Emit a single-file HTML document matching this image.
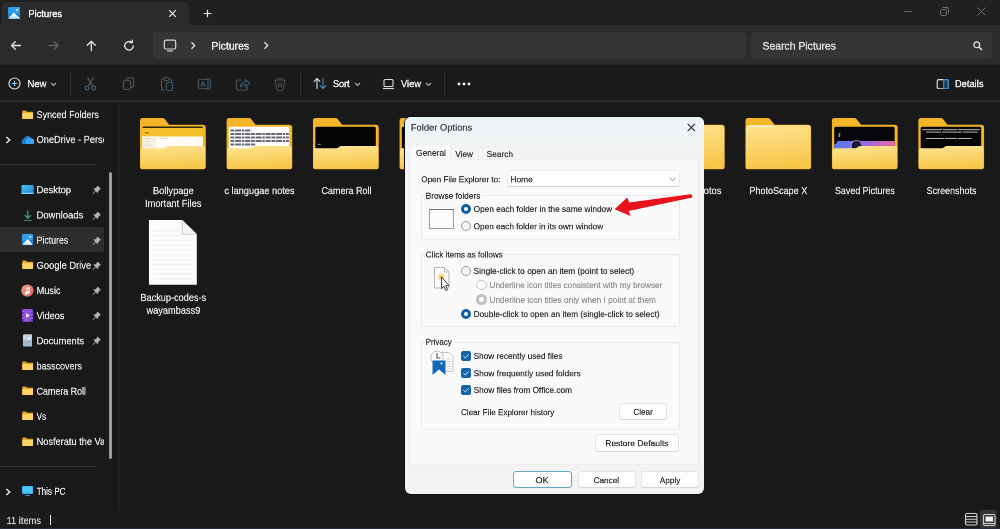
<!DOCTYPE html>
<html><head><meta charset="utf-8"><title>Pictures</title>
<style>
*{box-sizing:border-box;margin:0;padding:0}
html,body{width:1000px;height:529px;overflow:hidden;background:#191919}
body{position:relative;font-family:"Liberation Sans",sans-serif;font-size:9.5px;color:#fff}
.abs{position:absolute}
.t{position:absolute;left:0;top:0;white-space:nowrap;transform-origin:0 0;will-change:transform}
#titlebar{left:0;top:0;width:1000px;height:25px;background:#202020}
#tab{left:1.5px;top:1.5px;width:187.5px;height:23.5px;background:#2b2b2b;border-radius:5px 5px 0 0}
#nav{left:0;top:25px;width:1000px;height:40px;background:#2b2b2b}
#addr{left:153.3px;top:32.4px;width:592.5px;height:26.4px;background:#353535;border-radius:4px}
#search{left:751px;top:32.4px;width:241px;height:26.4px;background:#353535;border-radius:4px}
#cmd{left:0;top:65px;width:1000px;height:37px;background:#1b1b1b}
#cmdline{left:0;top:100px;width:1000px;height:2px;background:linear-gradient(#262626 50%,#313131 50%)}
#side{left:0;top:102px;width:120px;height:408px;background:#191919;border-right:2px solid;border-image:linear-gradient(90deg,#2c2c2c 50%,#222 50%) 1}
#status{left:0;top:510px;width:1000px;height:19px;background:#1b1b1b;border-bottom:1.5px solid #262a36}
.sep{position:absolute;width:1px;background:#303030;top:72px;height:24px}
.hl{position:absolute;height:1px;background:#343434;left:0;width:97px}
.sel{left:0;top:226.8px;width:103.7px;height:24.8px;background:#2d2d2d;border-radius:0 2px 2px 0;will-change:transform}
#dlg{left:404.8px;top:116.8px;width:299.2px;height:377.7px;background:#f3f3f3;border-radius:6px;overflow:hidden}
#dlgtitle{left:0;top:0;width:300px;height:43px;background:linear-gradient(#ecf4f8,#f1f4f5 55%,#f3f3f3 85%)}
#page{left:4.5px;top:42.2px;width:288.4px;height:305.8px;background:#fafafa;border:1px solid #eeeeee}
.grp{position:absolute;border:1px solid #e8e8e8;border-radius:2px}
.btn{position:absolute;background:#fdfdfd;border:1px solid #e4e4e4;border-bottom-color:#d6d6d6;border-radius:3px;will-change:transform}
.rad{position:absolute;width:10.4px;height:10.4px;border-radius:50%;border:1.2px solid #9a9a9a;background:#f6f6f6}
.rad.on{border:3.2px solid #0f5fa3;background:#fff}
.rad.dis{border-color:#c8c8c8;background:#fbfbfb}
.rad.dis.on{border:3.2px solid #c0c0c0;background:#fff}
.chk{position:absolute;width:10px;height:10px;border-radius:2px;background:#1464ad}
</style></head><body>
<div id="titlebar" class="abs"></div>
<div id="tab" class="abs"></div>
<div id="nav" class="abs"></div>
<div id="addr" class="abs"></div>
<div id="search" class="abs"></div>
<div id="cmd" class="abs"></div>
<div id="cmdline" class="abs"></div>
<div id="side" class="abs"></div>
<div id="status" class="abs"></div>
<svg class="abs" style="left:7.8px;top:7.3px" width="12.6" height="11.8" viewBox="0 0 15 14">
  <rect x="0" y="0" width="15" height="14" rx="2" fill="#1b86d8"/>
  <rect x="0" y="0" width="15" height="8" rx="2" fill="#2f9eea"/>
  <circle cx="10.8" cy="3.4" r="1.3" fill="#d8f0ff"/>
  <path d="M1.5 12.5 L7 6.5 L12.5 12.5Z" fill="#fff"/>
  <path d="M0.5 14 L3 11 L12 11 L14.5 14Z" fill="#bfe4ff"/>
</svg>
<div class="t" style="font-size:20.6px;line-height:29px;height:29px;color:#ffffff;-webkit-text-stroke:0.7px currentColor;transform:translate(28.5px,6.2px) scale(0.4502,0.5);">Pictures</div>
<svg class="abs" style="left:168px;top:8.8px" width="9" height="9" viewBox="0 0 9 9"><path d="M1.2 1.2L7.8 7.8M7.8 1.2L1.2 7.8" stroke="#ececec" stroke-width="1.2" fill="none"/></svg>
<svg class="abs" style="left:203.2px;top:9px" width="9" height="9" viewBox="0 0 9 9"><path d="M4.5 0.7V8.3M0.7 4.5H8.3" stroke="#ececec" stroke-width="1.2" fill="none"/></svg>
<svg class="abs" style="left:903px;top:6.3px" width="92" height="12" viewBox="0 0 92 12">
  <path d="M1 5.5H9" stroke="#5c5c5c" stroke-width="1" fill="none"/>
  <rect x="37.5" y="3.5" width="6" height="6" rx="1.2" stroke="#707070" stroke-width="1" fill="none"/>
  <path d="M39.5 1.5H44a1.5 1.5 0 0 1 1.5 1.5V7.5" stroke="#707070" stroke-width="1" fill="none"/>
  <path d="M74.5 1.5L82.5 9.5M82.5 1.5L74.5 9.5" stroke="#707070" stroke-width="1" fill="none"/>
</svg>
<svg class="abs" style="left:9px;top:38.5px" width="130" height="13" viewBox="0 0 130 13">
  <g fill="none" stroke-linecap="round" stroke-linejoin="round" stroke-width="1.3">
    <path d="M11.5 6.5H2.5M6.3 2.7L2.5 6.5L6.3 10.3" stroke="#e8e8e8"/>
    <path d="M40 6.5H49M45.2 2.7L49 6.5L45.2 10.3" stroke="#646464"/>
    <path d="M82.3 11.5V2.3M78.3 6.2L82.3 2.2L86.3 6.2" stroke="#e8e8e8"/>
    <path d="M124.3 6.8a4.3 4.3 0 1 1 -1.5 -3.3M123.3 1.2V3.7H120.8" stroke="#e8e8e8"/>
  </g>
</svg>
<svg class="abs" style="left:163px;top:38.5px" width="14" height="13" viewBox="0 0 14 13">
  <rect x="1.3" y="1.2" width="11.4" height="8.8" rx="1.5" fill="none" stroke="#d8d8d8" stroke-width="1.2"/>
  <path d="M4 12H10" stroke="#d0d0d0" stroke-width="1.2" fill="none"/>
</svg>
<svg class="abs" style="left:190.3px;top:41.3px" width="6" height="9" viewBox="0 0 6 9"><path d="M1.5 1.3L4.7 4.5L1.5 7.7" fill="none" stroke="#e6e6e6" stroke-width="1.3"/></svg>
<svg class="abs" style="left:263.3px;top:41.3px" width="6" height="9" viewBox="0 0 6 9"><path d="M1.5 1.3L4.7 4.5L1.5 7.7" fill="none" stroke="#e6e6e6" stroke-width="1.3"/></svg>
<svg class="abs" style="left:972.5px;top:41.3px" width="10" height="10" viewBox="0 0 10 10"><circle cx="3.8" cy="3.8" r="2.9" fill="none" stroke="#e8e8e8" stroke-width="1.3"/><path d="M6 6L9 9" stroke="#e8e8e8" stroke-width="1.5"/></svg>
<div class="t" style="font-size:21.6px;line-height:30px;height:30px;color:#f4f4f4;-webkit-text-stroke:0.7px currentColor;transform:translate(211.4px,38.6px) scale(0.4832,0.5);">Pictures</div>
<div class="t" style="font-size:21.6px;line-height:30px;height:30px;color:#e4e4e4;-webkit-text-stroke:0.7px currentColor;transform:translate(762.5px,38.6px) scale(0.482,0.5);">Search Pictures</div>
<svg class="abs" style="left:8px;top:77px" width="13" height="13" viewBox="0 0 13 13"><circle cx="6.5" cy="6.5" r="5.5" fill="none" stroke="#dedede" stroke-width="1.2"/><path d="M6.5 3.8V9.2M3.8 6.5H9.2" stroke="#8cc8f0" stroke-width="1.2"/></svg>
<svg class="abs" style="left:50px;top:82px" width="7" height="5" viewBox="0 0 7 5"><path d="M1 1L3.5 3.5L6 1" fill="none" stroke="#a8a8a8" stroke-width="1.2"/></svg>
<div class="sep" style="left:70px"></div>
<svg class="abs" style="left:82px;top:76px" width="210" height="16" viewBox="0 0 210 16" fill="none" stroke="#505050" stroke-width="1.2" stroke-linejoin="round">
  <path d="M5.5 1.5L11 10.5M11.5 1.5L6 10.5" stroke="#5c5c5c"/>
  <circle cx="5.2" cy="12" r="1.9" stroke="#3d5f78"/><circle cx="11.8" cy="12" r="1.9" stroke="#3d5f78"/>
  <rect x="41.5" y="4.5" width="7" height="9" rx="1.5"/>
  <path d="M44.5 4.5V3a1.2 1.2 0 0 1 1.2 -1.2H50a1.5 1.5 0 0 1 1.5 1.5V10a1.2 1.2 0 0 1 -1.2 1.2H48.5"/>
  <path d="M82.5 3H80.5a1 1 0 0 0 -1 1V13a1 1 0 0 0 1 1H83"/>
  <rect x="82" y="1.5" width="5" height="3" rx="1"/>
  <rect x="84.5" y="6.5" width="6" height="8" rx="1.2" stroke="#34566f"/>
  <path d="M87 3H88.5a1 1 0 0 1 1 1V6"/>
  <rect x="116.5" y="3.5" width="12" height="9" rx="1.5"/>
  <path d="M119 10.5L121 5.5L123 10.5M119.8 9H122.2" stroke="#34566f"/>
  <path d="M126 1.5V14.5" stroke="#34566f"/>
  <path d="M159 4H156a1.5 1.5 0 0 0 -1.5 1.5V12.5a1.5 1.5 0 0 0 1.5 1.5H164a1.5 1.5 0 0 0 1.5 -1.5V11"/>
  <path d="M158.5 10.5C159 7.5 161 6 163.5 6V3.5L167.5 7.3L163.5 11V8.5C161.5 8.5 160 9 158.5 10.5Z" stroke="#34566f"/>
  <path d="M192 4H204M196 4V2.5H200V4M193.5 4L194.4 13.3a1.3 1.3 0 0 0 1.3 1.2H200.3a1.3 1.3 0 0 0 1.3 -1.2L202.5 4M196.7 7V11.5M199.3 7V11.5" stroke-width="1.1"/>
</svg>
<div class="sep" style="left:300px"></div>
<svg class="abs" style="left:313px;top:77px" width="14" height="13" viewBox="0 0 14 13" fill="none" stroke-width="1.1" stroke-linecap="round" stroke-linejoin="round">
  <path d="M4 11.5V1.5M1.2 4.3L4 1.5L6.8 4.3" stroke="#e0e0e0"/>
  <path d="M10 1.5V11.5M7.2 8.7L10 11.5L12.8 8.7" stroke="#3a8fd0"/>
</svg>
<svg class="abs" style="left:354px;top:82px" width="7" height="5" viewBox="0 0 7 5"><path d="M1 1L3.5 3.5L6 1" fill="none" stroke="#a8a8a8" stroke-width="1.2"/></svg>
<svg class="abs" style="left:382px;top:78px" width="13" height="12" viewBox="0 0 13 12" fill="none" stroke="#dcdcdc" stroke-width="1.1">
  <rect x="2" y="1.5" width="9" height="7" rx="1"/><path d="M1 10.5H12"/>
</svg>
<svg class="abs" style="left:425px;top:82px" width="7" height="5" viewBox="0 0 7 5"><path d="M1 1L3.5 3.5L6 1" fill="none" stroke="#a8a8a8" stroke-width="1.2"/></svg>
<div class="sep" style="left:444px"></div>
<svg class="abs" style="left:457px;top:82px" width="14" height="4" viewBox="0 0 14 4" fill="#f8f8f8"><circle cx="2" cy="2" r="1.4"/><circle cx="7" cy="2" r="1.4"/><circle cx="12" cy="2" r="1.4"/></svg>
<svg class="abs" style="left:936px;top:78.5px" width="13.5" height="10.5" viewBox="0 0 13 11" fill="none">
  <rect x="0.7" y="0.7" width="11.6" height="9.6" rx="1.8" stroke="#e0e0e0" stroke-width="1.2"/>
  <path d="M7.5 0.7H10.5a1.8 1.8 0 0 1 1.8 1.8V8.5a1.8 1.8 0 0 1 -1.8 1.8H7.5Z" fill="#17405e" stroke="#3f8fcc" stroke-width="1.2"/>
</svg>
<div class="t" style="font-size:20.6px;line-height:29px;height:29px;color:#f0f0f0;-webkit-text-stroke:0.7px currentColor;transform:translate(27.5px,76.2px) scale(0.4605,0.5);">New</div>
<div class="t" style="font-size:20.6px;line-height:29px;height:29px;color:#f0f0f0;-webkit-text-stroke:0.7px currentColor;transform:translate(333px,76.2px) scale(0.4367,0.5);">Sort</div>
<div class="t" style="font-size:20.6px;line-height:29px;height:29px;color:#f0f0f0;-webkit-text-stroke:0.7px currentColor;transform:translate(401px,76.2px) scale(0.4511,0.5);">View</div>
<div class="t" style="font-size:20.6px;line-height:29px;height:29px;color:#f0f0f0;-webkit-text-stroke:0.7px currentColor;transform:translate(955px,76.2px) scale(0.4526,0.5);">Details</div>
<div class="abs sel"></div>
<div class="hl" style="top:164px"></div><div class="hl" style="top:466px"></div>
<div class="abs" style="left:108.9px;top:171.8px;width:3px;height:287px;background:#9c9c9c;border-radius:1.5px"></div>
<div class="t" style="font-size:20.6px;line-height:29px;height:29px;color:#e8e8e8;-webkit-text-stroke:0.5px currentColor;transform:translate(36.6px,107.09px) scale(0.4353,0.5);">Synced Folders</div>
<svg class="abs" style="left:21.6px;top:109.7px" width="11.6" height="9.3" viewBox="0 0 13 10.5"><path d="M0.3 1.5a1 1 0 0 1 1-1H4.3l1.4 1.4H11.7a1 1 0 0 1 1 1V9.2a1 1 0 0 1-1 1H1.3a1 1 0 0 1-1-1Z" fill="#e9a824"/><path d="M0.3 3.3H12.7V9.2a1 1 0 0 1-1 1H1.3a1 1 0 0 1-1-1Z" fill="#fbd466"/></svg>
<div class="abs" style="left:0;top:0;width:103.6px;height:529px;overflow:hidden"><div class="t" style="font-size:20.6px;line-height:29px;height:29px;color:#e8e8e8;-webkit-text-stroke:0.5px currentColor;transform:translate(36.6px,131.96px) scale(0.4475,0.5);">OneDrive - Persc</div></div>
<svg class="abs" style="left:20.5px;top:135.5px" width="13.6" height="8.8" viewBox="0 0 14 9"><path d="M3.4 8.7a3 3 0 0 1-.4-5.95A3.9 3.9 0 0 1 10.3 2.5a3.1 3.1 0 0 1 .4 6.2Z" fill="#1f7fd8"/><path d="M6.5 8.7h4.2a3.1 3.1 0 0 0 .6-6.1 3.6 3.6 0 0 0-4.8 6.1Z" fill="#3f9ff0"/></svg>
<div class="t" style="font-size:20.6px;line-height:29px;height:29px;color:#e8e8e8;-webkit-text-stroke:0.5px currentColor;transform:translate(36.6px,182.3px) scale(0.4553,0.5);">Desktop</div>
<svg class="abs" style="left:20.8px;top:185.1px" width="13.1" height="9.4" viewBox="0 0 13 10"><defs><linearGradient id="dg" x1="0" y1="0" x2="1" y2="1"><stop offset="0" stop-color="#45c4f2"/><stop offset="1" stop-color="#1f86d6"/></linearGradient></defs><rect x="0" y="0" width="13" height="10" rx="1.2" fill="url(#dg)"/><rect x="0" y="8.3" width="13" height="1.7" rx=".8" fill="#7fd0f4"/></svg>
<svg class="abs" style="left:92.3px;top:185.4px" width="9.5" height="9.5" viewBox="0 0 9 9"><path d="M5.3 0.5L8.5 3.7L7.3 4.3L6 5.6L5.6 7.9L3.6 5.9L1 8.5L0.5 8L3.1 5.4L1.1 3.4L3.4 3L4.7 1.7Z" fill="#b4b4b4"/></svg>
<div class="t" style="font-size:20.6px;line-height:29px;height:29px;color:#e8e8e8;-webkit-text-stroke:0.5px currentColor;transform:translate(36.6px,207.47px) scale(0.4573,0.5);">Downloads</div>
<svg class="abs" style="left:23px;top:209.5px" width="9.6" height="11.8" viewBox="0 0 10 12" fill="none" stroke="#34b08a" stroke-width="1.3"><path d="M5 0.5V8.3M1.8 5.2L5 8.4L8.2 5.2M0.8 11.2H9.2"/></svg>
<svg class="abs" style="left:92.3px;top:210.6px" width="9.5" height="9.5" viewBox="0 0 9 9"><path d="M5.3 0.5L8.5 3.7L7.3 4.3L6 5.6L5.6 7.9L3.6 5.9L1 8.5L0.5 8L3.1 5.4L1.1 3.4L3.4 3L4.7 1.7Z" fill="#b4b4b4"/></svg>
<div class="t" style="font-size:20.6px;line-height:29px;height:29px;color:#e8e8e8;-webkit-text-stroke:0.5px currentColor;transform:translate(36.6px,232.64px) scale(0.4247,0.5);">Pictures</div>
<svg class="abs" style="left:21.8px;top:234.1px" width="11.2" height="11.2" viewBox="0 0 15 15"><rect width="15" height="15" rx="2" fill="#1b86d8"/><rect width="15" height="8" rx="2" fill="#2f9eea"/><circle cx="10.8" cy="3.6" r="1.4" fill="#d8f0ff"/><path d="M1.5 13.2L7.5 6.8L13.5 13.2Z" fill="#fff"/><path d="M0.5 15L3 11.8H12L14.5 15Z" fill="#bfe4ff"/></svg>
<svg class="abs" style="left:92.3px;top:235.7px" width="9.5" height="9.5" viewBox="0 0 9 9"><path d="M5.3 0.5L8.5 3.7L7.3 4.3L6 5.6L5.6 7.9L3.6 5.9L1 8.5L0.5 8L3.1 5.4L1.1 3.4L3.4 3L4.7 1.7Z" fill="#b4b4b4"/></svg>
<div class="t" style="font-size:20.6px;line-height:29px;height:29px;color:#e8e8e8;-webkit-text-stroke:0.5px currentColor;transform:translate(36.6px,257.81px) scale(0.4533,0.5);">Google Drive</div>
<svg class="abs" style="left:21.6px;top:260.4px" width="11.6" height="9.3" viewBox="0 0 13 10.5"><path d="M0.3 1.5a1 1 0 0 1 1-1H4.3l1.4 1.4H11.7a1 1 0 0 1 1 1V9.2a1 1 0 0 1-1 1H1.3a1 1 0 0 1-1-1Z" fill="#e9a824"/><path d="M0.3 3.3H12.7V9.2a1 1 0 0 1-1 1H1.3a1 1 0 0 1-1-1Z" fill="#fbd466"/></svg>
<svg class="abs" style="left:92.3px;top:260.9px" width="9.5" height="9.5" viewBox="0 0 9 9"><path d="M5.3 0.5L8.5 3.7L7.3 4.3L6 5.6L5.6 7.9L3.6 5.9L1 8.5L0.5 8L3.1 5.4L1.1 3.4L3.4 3L4.7 1.7Z" fill="#b4b4b4"/></svg>
<div class="t" style="font-size:20.6px;line-height:29px;height:29px;color:#e8e8e8;-webkit-text-stroke:0.5px currentColor;transform:translate(36.6px,282.98px) scale(0.4443,0.5);">Music</div>
<svg class="abs" style="left:20.8px;top:284.1px" width="12.8" height="13.2" viewBox="0 0 13 13"><defs><linearGradient id="mg" x1="0" y1="0" x2="1" y2="1"><stop offset="0" stop-color="#f4a27c"/><stop offset="1" stop-color="#d65e74"/></linearGradient></defs><circle cx="6.5" cy="6.5" r="6.3" fill="url(#mg)"/><path d="M5.6 3.6L9 2.9V8.3a1.4 1.4 0 1 1-.9-1.3V4.5L6.5 4.8V9.3a1.4 1.4 0 1 1-.9-1.3Z" fill="#fff"/></svg>
<svg class="abs" style="left:92.3px;top:286.1px" width="9.5" height="9.5" viewBox="0 0 9 9"><path d="M5.3 0.5L8.5 3.7L7.3 4.3L6 5.6L5.6 7.9L3.6 5.9L1 8.5L0.5 8L3.1 5.4L1.1 3.4L3.4 3L4.7 1.7Z" fill="#b4b4b4"/></svg>
<div class="t" style="font-size:20.6px;line-height:29px;height:29px;color:#e8e8e8;-webkit-text-stroke:0.5px currentColor;transform:translate(36.6px,308.15px) scale(0.4439,0.5);">Videos</div>
<svg class="abs" style="left:22px;top:309.3px" width="10.9" height="12.8" viewBox="0 0 11 13"><rect width="11" height="13" rx="1.3" fill="#8c52de"/><rect x="0" y="0" width="2" height="13" fill="#6a34bc"/><rect x="9" y="0" width="2" height="13" fill="#6a34bc"/><g fill="#b48cf0"><rect x=".4" y="1.5" width="1.2" height="1.5"/><rect x=".4" y="5" width="1.2" height="1.5"/><rect x=".4" y="8.5" width="1.2" height="1.5"/><rect x="9.4" y="1.5" width="1.2" height="1.5"/><rect x="9.4" y="5" width="1.2" height="1.5"/><rect x="9.4" y="8.5" width="1.2" height="1.5"/></g><path d="M4 4.2L8 6.5L4 8.8Z" fill="#fff"/></svg>
<svg class="abs" style="left:92.3px;top:311.3px" width="9.5" height="9.5" viewBox="0 0 9 9"><path d="M5.3 0.5L8.5 3.7L7.3 4.3L6 5.6L5.6 7.9L3.6 5.9L1 8.5L0.5 8L3.1 5.4L1.1 3.4L3.4 3L4.7 1.7Z" fill="#b4b4b4"/></svg>
<div class="t" style="font-size:20.6px;line-height:29px;height:29px;color:#e8e8e8;-webkit-text-stroke:0.5px currentColor;transform:translate(36.6px,333.32px) scale(0.4559,0.5);">Documents</div>
<svg class="abs" style="left:22.8px;top:333.9px" width="9.3" height="13" viewBox="0 0 10 13"><rect width="10" height="13" rx="1.2" fill="#a9bccd"/><rect x="0" y="0" width="10" height="6" rx="1.2" fill="#c6d4e0"/><rect x="5.5" y="3.5" width="2" height="2" fill="#fff"/><rect x="2" y="8" width="6" height="1" fill="#8fa5b8"/></svg>
<svg class="abs" style="left:92.3px;top:336.4px" width="9.5" height="9.5" viewBox="0 0 9 9"><path d="M5.3 0.5L8.5 3.7L7.3 4.3L6 5.6L5.6 7.9L3.6 5.9L1 8.5L0.5 8L3.1 5.4L1.1 3.4L3.4 3L4.7 1.7Z" fill="#b4b4b4"/></svg>
<div class="t" style="font-size:20.6px;line-height:29px;height:29px;color:#e8e8e8;-webkit-text-stroke:0.5px currentColor;transform:translate(36.6px,358.49px) scale(0.4357,0.5);">basscovers</div>
<svg class="abs" style="left:21.6px;top:361.1px" width="11.6" height="9.3" viewBox="0 0 13 10.5"><path d="M0.3 1.5a1 1 0 0 1 1-1H4.3l1.4 1.4H11.7a1 1 0 0 1 1 1V9.2a1 1 0 0 1-1 1H1.3a1 1 0 0 1-1-1Z" fill="#e9a824"/><path d="M0.3 3.3H12.7V9.2a1 1 0 0 1-1 1H1.3a1 1 0 0 1-1-1Z" fill="#fbd466"/></svg>
<div class="t" style="font-size:20.6px;line-height:29px;height:29px;color:#e8e8e8;-webkit-text-stroke:0.5px currentColor;transform:translate(36.6px,383.66px) scale(0.4315,0.5);">Camera Roll</div>
<svg class="abs" style="left:21.6px;top:386.3px" width="11.6" height="9.3" viewBox="0 0 13 10.5"><path d="M0.3 1.5a1 1 0 0 1 1-1H4.3l1.4 1.4H11.7a1 1 0 0 1 1 1V9.2a1 1 0 0 1-1 1H1.3a1 1 0 0 1-1-1Z" fill="#e9a824"/><path d="M0.3 3.3H12.7V9.2a1 1 0 0 1-1 1H1.3a1 1 0 0 1-1-1Z" fill="#fbd466"/></svg>
<div class="t" style="font-size:20.6px;line-height:29px;height:29px;color:#e8e8e8;-webkit-text-stroke:0.5px currentColor;transform:translate(36.6px,408.83px) scale(0.3952,0.5);">Vs</div>
<svg class="abs" style="left:21.6px;top:411.4px" width="11.6" height="9.3" viewBox="0 0 13 10.5"><path d="M0.3 1.5a1 1 0 0 1 1-1H4.3l1.4 1.4H11.7a1 1 0 0 1 1 1V9.2a1 1 0 0 1-1 1H1.3a1 1 0 0 1-1-1Z" fill="#e9a824"/><path d="M0.3 3.3H12.7V9.2a1 1 0 0 1-1 1H1.3a1 1 0 0 1-1-1Z" fill="#fbd466"/></svg>
<div class="abs" style="left:0;top:0;width:103.6px;height:529px;overflow:hidden"><div class="t" style="font-size:20.6px;line-height:29px;height:29px;color:#e8e8e8;-webkit-text-stroke:0.5px currentColor;transform:translate(36.6px,434px) scale(0.4481,0.5);">Nosferatu the Va</div></div>
<svg class="abs" style="left:21.6px;top:436.6px" width="11.6" height="9.3" viewBox="0 0 13 10.5"><path d="M0.3 1.5a1 1 0 0 1 1-1H4.3l1.4 1.4H11.7a1 1 0 0 1 1 1V9.2a1 1 0 0 1-1 1H1.3a1 1 0 0 1-1-1Z" fill="#e9a824"/><path d="M0.3 3.3H12.7V9.2a1 1 0 0 1-1 1H1.3a1 1 0 0 1-1-1Z" fill="#fbd466"/></svg>
<div class="t" style="font-size:20.6px;line-height:29px;height:29px;color:#e8e8e8;-webkit-text-stroke:0.5px currentColor;transform:translate(36.6px,483.74px) scale(0.3945,0.5);">This PC</div>
<svg class="abs" style="left:22px;top:486.1px" width="11.2" height="10.3" viewBox="0 0 12 11"><rect x="0" y="0" width="12" height="8.5" rx="1.2" fill="#35b4f0"/><rect x="0.8" y="0.8" width="10.4" height="6" rx=".6" fill="#52c6f6"/><rect x="3.5" y="9.5" width="5" height="1.2" rx=".5" fill="#2a90d0"/></svg>
<svg class="abs" style="left:4.8px;top:135.8px" width="6.5" height="8" viewBox="0 0 6.5 8"><path d="M1.3 0.9L4.8 4L1.3 7.1" fill="none" stroke="#f0f0f0" stroke-width="1.4"/></svg>
<svg class="abs" style="left:4.8px;top:487.5px" width="6.5" height="8" viewBox="0 0 6.5 8"><path d="M1.3 0.9L4.8 4L1.3 7.1" fill="none" stroke="#f0f0f0" stroke-width="1.4"/></svg>
<div class="t" style="font-size:20.6px;line-height:29px;height:29px;color:#d4d4d4;-webkit-text-stroke:0.5px currentColor;transform:translate(6.5px,513px) scale(0.452,0.5);">11 items</div>
<div class="abs" style="left:49.5px;top:515px;width:1px;height:10px;background:#e8e8e8"></div>
<div class="abs" style="left:980px;top:510px;width:17px;height:18px;background:#353535;border-radius:2px"></div>
<svg class="abs" style="left:964px;top:512px" width="33" height="15" viewBox="0 0 33 15" fill="none" stroke="#d0d0d0" stroke-width="1.1">
<rect x="1.5" y="1.5" width="11.5" height="11.5" rx="1.5"/><path d="M1.5 4.5H13M1.5 7.2H13M1.5 10H13" />
<rect x="19.5" y="2.5" width="11.5" height="11" rx="1.5"/><rect x="21.5" y="4.5" width="7.5" height="5" fill="#f4f4f4" stroke="none"/><path d="M20 11.5H31"/>
</svg>
<svg class="abs" style="left:0;top:0" width="1000" height="529" viewBox="0 0 1000 529">
<defs><linearGradient id="ff" x1="0" y1="0" x2="0.15" y2="1"><stop offset="0" stop-color="#fde391"/><stop offset="1" stop-color="#f8c74a"/></linearGradient><linearGradient id="sg" x1="0" y1="0" x2="1" y2="0"><stop offset="0" stop-color="#5a78f0"/><stop offset=".45" stop-color="#8a6ae8"/><stop offset="1" stop-color="#f06aa0"/></linearGradient></defs>
<svg x="139.9" y="117.4" width="66.4" height="52.9" viewBox="0 0 67 54" preserveAspectRatio="none"><path d="M0 3.5a3 3 0 0 1 3-3H22.5a3.5 3.5 0 0 1 2.7 1.3L29.5 7.5H63.5a3 3 0 0 1 3 3V50a3 3 0 0 1-3 3H3a3 3 0 0 1-3-3Z" fill="#f4b52a"/><rect x="2.5" y="9.5" width="61" height="24" rx="1.5" fill="#f6c02c"/><rect x="2.5" y="9.3" width="61" height="1.6" rx=".8" fill="#2e2810"/><rect x="5" y="15" width="4" height="1.2" fill="#8a6a10"/><rect x="2.5" y="19.5" width="61" height="14" fill="#fffdf6"/><rect x="2.5" y="19.5" width="14" height="14" fill="#f7f1e2"/><g fill="#d8d2c4"><rect x="4" y="21" width="7" height=".8"/><rect x="19" y="21" width="9" height=".8"/><rect x="4" y="24.5" width="7" height=".8"/><rect x="4" y="28" width="7" height=".8"/></g><path d="M0.6 33.5a2 2 0 0 1 2-2H24c2.2 0 2.8-2.2 5-2.2H63.9a2 2 0 0 1 2 2V50a2.5 2.5 0 0 1-2.5 2.5H3.1a2.5 2.5 0 0 1-2.5-2.5Z" fill="url(#ff)"/></svg>
<svg x="226.38" y="117.4" width="66.4" height="52.9" viewBox="0 0 67 54" preserveAspectRatio="none"><path d="M0 3.5a3 3 0 0 1 3-3H22.5a3.5 3.5 0 0 1 2.7 1.3L29.5 7.5H63.5a3 3 0 0 1 3 3V50a3 3 0 0 1-3 3H3a3 3 0 0 1-3-3Z" fill="#f4b52a"/><rect x="2.5" y="9.5" width="61" height="24" rx="1.5" fill="#fdfdfb"/><g stroke="#3c3e52" stroke-width="2" stroke-dasharray="4 .8 6 .8 2.5 .8 5 .8" opacity=".78"><path d="M4 13.3H25"/><path d="M4 16.9H63"/><path d="M4 20.5H63"/><path d="M4 24.1H63"/><path d="M4 27.7H30"/></g><path d="M0.6 33.5a2 2 0 0 1 2-2H24c2.2 0 2.8-2.2 5-2.2H63.9a2 2 0 0 1 2 2V50a2.5 2.5 0 0 1-2.5 2.5H3.1a2.5 2.5 0 0 1-2.5-2.5Z" fill="url(#ff)"/></svg>
<svg x="312.86" y="117.4" width="66.4" height="52.9" viewBox="0 0 67 54" preserveAspectRatio="none"><path d="M0 3.5a3 3 0 0 1 3-3H22.5a3.5 3.5 0 0 1 2.7 1.3L29.5 7.5H63.5a3 3 0 0 1 3 3V50a3 3 0 0 1-3 3H3a3 3 0 0 1-3-3Z" fill="#f4b52a"/><rect x="2.5" y="9.5" width="61" height="23" rx="1.5" fill="#050505"/><rect x="5" y="27" width="3" height="1" fill="#8a8"/><path d="M0.6 33.5a2 2 0 0 1 2-2H24c2.2 0 2.8-2.2 5-2.2H63.9a2 2 0 0 1 2 2V50a2.5 2.5 0 0 1-2.5 2.5H3.1a2.5 2.5 0 0 1-2.5-2.5Z" fill="url(#ff)"/></svg>
<svg x="399.34" y="117.4" width="66.4" height="52.9" viewBox="0 0 67 54" preserveAspectRatio="none"><path d="M0 3.5a3 3 0 0 1 3-3H22.5a3.5 3.5 0 0 1 2.7 1.3L29.5 7.5H63.5a3 3 0 0 1 3 3V50a3 3 0 0 1-3 3H3a3 3 0 0 1-3-3Z" fill="#f4b52a"/><rect x="2.5" y="9.5" width="61" height="23" rx="1.5" fill="#050505"/><rect x="5" y="27" width="3" height="1" fill="#8a8"/><path d="M0.6 33.5a2 2 0 0 1 2-2H24c2.2 0 2.8-2.2 5-2.2H63.9a2 2 0 0 1 2 2V50a2.5 2.5 0 0 1-2.5 2.5H3.1a2.5 2.5 0 0 1-2.5-2.5Z" fill="url(#ff)"/></svg>
<svg x="658.78" y="117.4" width="66.4" height="52.9" viewBox="0 0 67 54" preserveAspectRatio="none"><path d="M0 3.5a3 3 0 0 1 3-3H22.5a3.5 3.5 0 0 1 2.7 1.3L29.5 7.5H63.5a3 3 0 0 1 3 3V50a3 3 0 0 1-3 3H3a3 3 0 0 1-3-3Z" fill="#f4b52a"/><path d="M0.6 10.5a2.5 2.5 0 0 1 2.5-2.5H63.4a2.5 2.5 0 0 1 2.5 2.5V50a2.5 2.5 0 0 1-2.5 2.5H3.1a2.5 2.5 0 0 1-2.5-2.5Z" fill="url(#ff)"/><rect x="3" y="8.3" width="25" height="1.6" rx=".8" fill="#fff6d8" opacity=".95"/></svg>
<svg x="745.26" y="117.4" width="66.4" height="52.9" viewBox="0 0 67 54" preserveAspectRatio="none"><path d="M0 3.5a3 3 0 0 1 3-3H22.5a3.5 3.5 0 0 1 2.7 1.3L29.5 7.5H63.5a3 3 0 0 1 3 3V50a3 3 0 0 1-3 3H3a3 3 0 0 1-3-3Z" fill="#f4b52a"/><path d="M0.6 10.5a2.5 2.5 0 0 1 2.5-2.5H63.4a2.5 2.5 0 0 1 2.5 2.5V50a2.5 2.5 0 0 1-2.5 2.5H3.1a2.5 2.5 0 0 1-2.5-2.5Z" fill="url(#ff)"/><rect x="3" y="8.3" width="25" height="1.6" rx=".8" fill="#fff6d8" opacity=".95"/></svg>
<svg x="831.74" y="117.4" width="66.4" height="52.9" viewBox="0 0 67 54" preserveAspectRatio="none"><path d="M0 3.5a3 3 0 0 1 3-3H22.5a3.5 3.5 0 0 1 2.7 1.3L29.5 7.5H63.5a3 3 0 0 1 3 3V50a3 3 0 0 1-3 3H3a3 3 0 0 1-3-3Z" fill="#f4b52a"/><rect x="2.5" y="9.5" width="61" height="23" rx="1.5" fill="#07070c"/><path d="M6 24H63.5V28H4Z" fill="url(#sg)"/><rect x="2.5" y="27" width="61" height="6" fill="url(#sg)"/><circle cx="25" cy="29" r="5.5" fill="#1a1a3a" stroke="#c8c8e8" stroke-width=".7"/><rect x="7" y="16" width="1.5" height="4" fill="#6ab"/><path d="M0.6 33.5a2 2 0 0 1 2-2H24c2.2 0 2.8-2.2 5-2.2H63.9a2 2 0 0 1 2 2V50a2.5 2.5 0 0 1-2.5 2.5H3.1a2.5 2.5 0 0 1-2.5-2.5Z" fill="url(#ff)"/></svg>
<svg x="918.22" y="117.4" width="66.4" height="52.9" viewBox="0 0 67 54" preserveAspectRatio="none"><path d="M0 3.5a3 3 0 0 1 3-3H22.5a3.5 3.5 0 0 1 2.7 1.3L29.5 7.5H63.5a3 3 0 0 1 3 3V50a3 3 0 0 1-3 3H3a3 3 0 0 1-3-3Z" fill="#f4b52a"/><rect x="2.5" y="9.5" width="61" height="23" rx="1.5" fill="#060606"/><g stroke="#cfcfcf" stroke-width=".9"><path d="M4 12.5H62" stroke-dasharray="20 1 14 1 25 2"/><path d="M8 15H60" stroke-dasharray="15 1 20 1"/><path d="M8 21.5H54" stroke-dasharray="18 1 12 1"/></g><path d="M0.6 33.5a2 2 0 0 1 2-2H24c2.2 0 2.8-2.2 5-2.2H63.9a2 2 0 0 1 2 2V50a2.5 2.5 0 0 1-2.5 2.5H3.1a2.5 2.5 0 0 1-2.5-2.5Z" fill="url(#ff)"/></svg>
<svg x="148.6" y="219.8" width="48.5" height="65.2" viewBox="0 0 49 65" preserveAspectRatio="none">
<path d="M0.3 0.3H34L48.7 14.5V64.7H0.3Z" fill="#fcfcfc"/>
<path d="M34 0.3V14.5H48.7Z" fill="#f6f6f6"/>
<path d="M34 0.6V14.5H48.4" fill="none" stroke="#c9c9c9" stroke-width="1"/>
<g stroke="#e9e9e9" stroke-width="0.9"><path d="M4.5 11H32"/><path d="M4.5 15.8H32"/><path d="M4.5 20.6H44"/><path d="M4.5 25.4H44"/><path d="M4.5 30.2H44"/><path d="M4.5 35H44"/><path d="M4.5 39.8H44"/><path d="M4.5 44.6H44"/><path d="M4.5 49.4H44"/><path d="M4.5 54.2H44"/><path d="M4.5 59H44"/></g>
</svg>
</svg>
<div class="t" style="font-size:20.6px;line-height:29px;height:29px;color:#e6e6e6;-webkit-text-stroke:0.5px currentColor;transform:translate(152.9px,183.1px) scale(0.451,0.5);">Bollypage</div>
<div class="t" style="font-size:20.6px;line-height:29px;height:29px;color:#e6e6e6;-webkit-text-stroke:0.5px currentColor;transform:translate(145px,195.9px) scale(0.452,0.5);">Imortant Files</div>
<div class="t" style="font-size:20.6px;line-height:29px;height:29px;color:#e6e6e6;-webkit-text-stroke:0.5px currentColor;transform:translate(224.3px,183.1px) scale(0.448,0.5);">c langugae notes</div>
<div class="t" style="font-size:20.6px;line-height:29px;height:29px;color:#e6e6e6;-webkit-text-stroke:0.5px currentColor;transform:translate(321.5px,183.1px) scale(0.4368,0.5);">Camera Roll</div>
<div class="t" style="font-size:20.6px;line-height:29px;height:29px;color:#e6e6e6;-webkit-text-stroke:0.5px currentColor;transform:translate(692px,183.1px) scale(0.46,0.5);">Photos</div>
<div class="t" style="font-size:20.6px;line-height:29px;height:29px;color:#e6e6e6;-webkit-text-stroke:0.5px currentColor;transform:translate(749.4px,183.1px) scale(0.4396,0.5);">PhotoScape X</div>
<div class="t" style="font-size:20.6px;line-height:29px;height:29px;color:#e6e6e6;-webkit-text-stroke:0.5px currentColor;transform:translate(835px,183.1px) scale(0.4316,0.5);">Saved Pictures</div>
<div class="t" style="font-size:20.6px;line-height:29px;height:29px;color:#e6e6e6;-webkit-text-stroke:0.5px currentColor;transform:translate(926.6px,183.1px) scale(0.4357,0.5);">Screenshots</div>
<div class="t" style="font-size:20.6px;line-height:29px;height:29px;color:#e6e6e6;-webkit-text-stroke:0.5px currentColor;transform:translate(140.4px,290px) scale(0.4455,0.5);">Backup-codes-s</div>
<div class="t" style="font-size:20.6px;line-height:29px;height:29px;color:#e6e6e6;-webkit-text-stroke:0.5px currentColor;transform:translate(146.52px,302.8px) scale(0.4474,0.5);">wayambass9</div>
<div class="abs" style="left:404.2px;top:116.2px;width:300.4px;height:379px;border-radius:7.5px;background:#101010;will-change:transform"></div>
<div id="dlg" class="abs"><div id="dlgtitle" class="abs"></div>
<div class="abs" style="left:46px;top:30px;width:27px;height:14px;background:#f5f5f5;border:1px solid #f0f0f0;border-bottom:0"></div><div class="abs" style="left:73px;top:30px;width:38px;height:14px;background:#f5f5f5;border:1px solid #f0f0f0;border-bottom:0"></div><div id="page" class="abs"></div>
<div class="abs" style="left:5.5px;top:27.5px;width:40.5px;height:17px;background:#fafafa;border:1px solid #f0f0f0;border-bottom:0"></div></div>
<div class="t" style="font-size:19.2px;line-height:27px;height:27px;color:#3a3a3a;-webkit-text-stroke:0.4px currentColor;transform:translate(410.8px,120.6px) scale(0.4876,0.5);">Folder Options</div>
<svg class="abs" style="left:686.5px;top:123px;will-change:transform" width="9" height="9" viewBox="0 0 9 9"><path d="M0.7 0.8L8 8.1M8 0.8L0.7 8.1" stroke="#2a2a2a" stroke-width="1.2" fill="none"/></svg>
<div class="t" style="font-size:16.9px;line-height:24px;height:24px;color:#2c2c2c;-webkit-text-stroke:0.4px currentColor;transform:translate(416px,147.2px) scale(0.4989,0.5);">General</div>
<div class="t" style="font-size:16.9px;line-height:24px;height:24px;color:#2c2c2c;-webkit-text-stroke:0.4px currentColor;transform:translate(455.3px,148.5px) scale(0.4867,0.5);">View</div>
<div class="t" style="font-size:16.9px;line-height:24px;height:24px;color:#2c2c2c;-webkit-text-stroke:0.4px currentColor;transform:translate(486.6px,148.5px) scale(0.4931,0.5);">Search</div>
<div class="t" style="font-size:16.9px;line-height:24px;height:24px;color:#2c2c2c;-webkit-text-stroke:0.4px currentColor;transform:translate(421.2px,173.8px) scale(0.4818,0.5);">Open File Explorer to:</div>
<div class="abs" style="left:507px;top:170px;width:172.5px;height:17.4px;background:#fdfdfd;border:1px solid #e9e9e9;border-bottom-color:#d2d2d2;border-radius:2px"></div>
<div class="t" style="font-size:16.9px;line-height:24px;height:24px;color:#2c2c2c;-webkit-text-stroke:0.4px currentColor;transform:translate(510.5px,173.8px) scale(0.4924,0.5);">Home</div>
<svg class="abs" style="left:669px;top:176.5px" width="7" height="5" viewBox="0 0 7 5"><path d="M0.7 0.8L3.5 3.8L6.3 0.8" fill="none" stroke="#8a8a8a" stroke-width="1"/></svg>
<div class="grp" style="left:421px;top:195px;width:259px;height:44.5px"></div><div class="abs" style="left:424px;top:193px;width:58.1px;height:5px;background:#fafafa"></div>
<div class="t" style="font-size:16.9px;line-height:24px;height:24px;color:#2c2c2c;-webkit-text-stroke:0.4px currentColor;transform:translate(425.7px,190.2px) scale(0.4885,0.5);">Browse folders</div>
<div class="grp" style="left:421px;top:254px;width:259px;height:73px"></div><div class="abs" style="left:424px;top:252px;width:80.6px;height:5px;background:#fafafa"></div>
<div class="t" style="font-size:16.9px;line-height:24px;height:24px;color:#2c2c2c;-webkit-text-stroke:0.4px currentColor;transform:translate(425.7px,249px) scale(0.4801,0.5);">Click items as follows</div>
<div class="grp" style="left:421px;top:341.5px;width:259px;height:88px"></div><div class="abs" style="left:424px;top:339.5px;width:29.5px;height:5px;background:#fafafa"></div>
<div class="t" style="font-size:16.9px;line-height:24px;height:24px;color:#2c2c2c;-webkit-text-stroke:0.4px currentColor;transform:translate(425.7px,336.3px) scale(0.4693,0.5);">Privacy</div>
<div class="abs" style="left:429.2px;top:208.5px;width:24.8px;height:20.3px;border:1px solid #9c9c9c;border-top:1.5px solid #727272;background:#fbfbfb;will-change:transform"></div>
<div class="rad on" style="left:460.8px;top:203.7px"></div>
<div class="t" style="font-size:16.9px;line-height:24px;height:24px;color:#2c2c2c;-webkit-text-stroke:0.4px currentColor;transform:translate(473.6px,203.4px) scale(0.4901,0.5);">Open each folder in the same window</div>
<div class="rad " style="left:460.8px;top:221px"></div>
<div class="t" style="font-size:16.9px;line-height:24px;height:24px;color:#2c2c2c;-webkit-text-stroke:0.4px currentColor;transform:translate(473.6px,220.8px) scale(0.4878,0.5);">Open each folder in its own window</div>
<svg class="abs" style="left:600px;top:185px" width="110" height="40" viewBox="600 185 110 40"><path d="M614.6 209.2L627.2 197.5L629.3 202.6L690.3 194.2Q692.8 194.4 692.3 197.4L628.6 211L630.7 216Z" fill="#e8121b"/></svg>
<svg class="abs" style="left:433px;top:266px" width="19" height="27" viewBox="0 0 19 27">
<path d="M1.5 1.5H11.5L16 6V22H1.5Z" fill="#fdfdfd" stroke="#a8a8a8" stroke-width=".9"/>
<path d="M11.5 1.5V6H16" fill="none" stroke="#a8a8a8" stroke-width=".8"/>
<circle cx="8.5" cy="11" r="3.6" fill="#f8d890" opacity=".85"/><circle cx="8.5" cy="11" r="1.3" fill="#e8a830"/>
<path d="M8.5 11V22.5L11 20.2L12.8 24.5L14.5 23.7L12.7 19.6H16Z" fill="#fff" stroke="#333" stroke-width=".9" stroke-linejoin="round"/>
</svg>
<div class="rad " style="left:460.8px;top:265.5px"></div>
<div class="t" style="font-size:16.9px;line-height:24px;height:24px;color:#2c2c2c;-webkit-text-stroke:0.4px currentColor;transform:translate(473.6px,265.4px) scale(0.4916,0.5);">Single-click to open an item (point to select)</div>
<div class="rad dis" style="left:476.4px;top:279.6px"></div>
<div class="t" style="font-size:16.9px;line-height:24px;height:24px;color:#8e8e8e;-webkit-text-stroke:0.4px currentColor;transform:translate(489.5px,279.5px) scale(0.487,0.5);">Underline icon titles consistent with my browser</div>
<div class="rad dis on" style="left:476.4px;top:294.4px"></div>
<div class="t" style="font-size:16.9px;line-height:24px;height:24px;color:#8e8e8e;-webkit-text-stroke:0.4px currentColor;transform:translate(489.5px,294.3px) scale(0.4896,0.5);">Underline icon titles only when I point at them</div>
<div class="rad on" style="left:460.8px;top:308.6px"></div>
<div class="t" style="font-size:16.9px;line-height:24px;height:24px;color:#2c2c2c;-webkit-text-stroke:0.4px currentColor;transform:translate(473.6px,308.5px) scale(0.4902,0.5);">Double-click to open an item (single-click to select)</div>
<svg class="abs" style="left:429px;top:349px" width="26" height="28" viewBox="0 0 26 28">
<path d="M12.5 3.5H20L24 7.5V22.5H12.5Z" fill="#fdfdfd" stroke="#b0b0b0" stroke-width=".8"/>
<g stroke="#c0c0c0" stroke-width=".7"><path d="M18 10H22.5M18 12.5H22.5M18 15H22.5M18 17.5H22.5M18 20H22.5"/></g>
<circle cx="8" cy="8.5" r="6.3" fill="#fbfbfb" stroke="#b8b8b8" stroke-width=".9"/>
<path d="M8 4V9H11.5" fill="none" stroke="#555" stroke-width="1.1"/>
<path d="M3.5 11.5H16.5V26L10 20.5L3.5 26Z" fill="#1468b8"/>
<circle cx="12.5" cy="14.5" r="1" fill="#fff"/>
</svg>
<div class="chk" style="left:461px;top:350.7px"></div><svg class="abs" style="left:461px;top:350.7px" width="10" height="10" viewBox="0 0 10 10"><path d="M2.5 5.2L4.3 6.9L7.6 3.4" fill="none" stroke="#eef4fa" stroke-width="0.95"/></svg>
<div class="t" style="font-size:16.9px;line-height:24px;height:24px;color:#2c2c2c;-webkit-text-stroke:0.4px currentColor;transform:translate(473.6px,350.4px) scale(0.4878,0.5);">Show recently used files</div>
<div class="chk" style="left:461px;top:368px"></div><svg class="abs" style="left:461px;top:368px" width="10" height="10" viewBox="0 0 10 10"><path d="M2.5 5.2L4.3 6.9L7.6 3.4" fill="none" stroke="#eef4fa" stroke-width="0.95"/></svg>
<div class="t" style="font-size:16.9px;line-height:24px;height:24px;color:#2c2c2c;-webkit-text-stroke:0.4px currentColor;transform:translate(473.6px,367.8px) scale(0.4918,0.5);">Show frequently used folders</div>
<div class="chk" style="left:461px;top:384.8px"></div><svg class="abs" style="left:461px;top:384.8px" width="10" height="10" viewBox="0 0 10 10"><path d="M2.5 5.2L4.3 6.9L7.6 3.4" fill="none" stroke="#eef4fa" stroke-width="0.95"/></svg>
<div class="t" style="font-size:16.9px;line-height:24px;height:24px;color:#2c2c2c;-webkit-text-stroke:0.4px currentColor;transform:translate(473.6px,384.4px) scale(0.4904,0.5);">Show files from Office.com</div>
<div class="t" style="font-size:16.9px;line-height:24px;height:24px;color:#2c2c2c;-webkit-text-stroke:0.4px currentColor;transform:translate(461px,406.7px) scale(0.4804,0.5);">Clear File Explorer history</div>
<div class="btn" style="left:619px;top:403.3px;width:48.3px;height:16.5px;"></div>
<div class="t" style="font-size:16.9px;line-height:24px;height:24px;color:#2c2c2c;-webkit-text-stroke:0.4px currentColor;transform:translate(633.3px,406.3px) scale(0.4828,0.5);">Clear</div>
<div class="btn" style="left:595px;top:434px;width:84px;height:17.5px;"></div>
<div class="t" style="font-size:16.9px;line-height:24px;height:24px;color:#2c2c2c;-webkit-text-stroke:0.4px currentColor;transform:translate(605.2px,437.7px) scale(0.5029,0.5);">Restore Defaults</div>
<div class="btn" style="left:513px;top:471.2px;width:58.5px;height:17.1px;border:1px solid #64a6c4;border-radius:3px"></div>
<div class="t" style="font-size:16.9px;line-height:24px;height:24px;color:#2c2c2c;-webkit-text-stroke:0.4px currentColor;transform:translate(535.5px,474.7px) scale(0.5323,0.5);">OK</div>
<div class="btn" style="left:577.6px;top:471.2px;width:57.7px;height:17.1px;"></div>
<div class="t" style="font-size:16.9px;line-height:24px;height:24px;color:#2c2c2c;-webkit-text-stroke:0.4px currentColor;transform:translate(593.7px,474.7px) scale(0.4809,0.5);">Cancel</div>
<div class="btn" style="left:640.5px;top:471.2px;width:57.8px;height:17.1px;"></div>
<div class="t" style="font-size:16.9px;line-height:24px;height:24px;color:#2c2c2c;-webkit-text-stroke:0.4px currentColor;transform:translate(659.7px,474.7px) scale(0.4897,0.5);">Apply</div>
</body></html>
